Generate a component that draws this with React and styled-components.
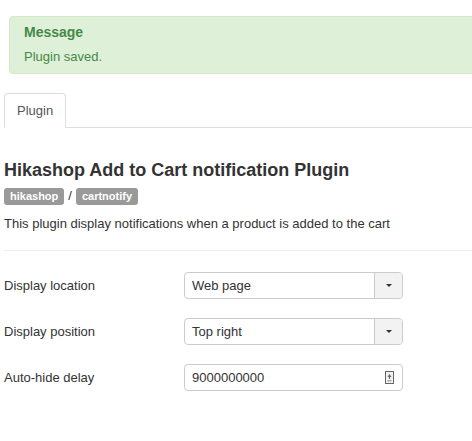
import styled, { createGlobalStyle } from 'styled-components';

const GlobalStyle = createGlobalStyle`
  body {
    margin: 0;
    background: #fff;
    font-family: "Liberation Sans", Arial, sans-serif;
    font-size: 13px;
    line-height: 18px;
    color: #333;
  }
`;

const Page = styled.div`
  padding: 16px 4px 0 4px;
  overflow: hidden;
`;

const Alert = styled.div`
  margin: 0 -30px 0 5px;
  padding: 6px 14px 7px;
  background: #dff0d8;
  border: 1px solid #d6e9c6;
  border-radius: 4px;
  color: #468847;
`;

const AlertHeading = styled.h4`
  margin: 0 0 7px;
  font-size: 14px;
  line-height: 18px;
  font-weight: bold;
`;

const AlertText = styled.p`
  margin: 0;
`;

const Tabs = styled.ul`
  display: flex;
  list-style: none;
  margin: 19px -4px 0 0;
  padding: 0;
  border-bottom: 1px solid #ddd;
`;

const Tab = styled.li`
  padding: 8px 12px 7px;
  margin-bottom: -1px;
  border: 1px solid #ddd;
  border-bottom-color: #fff;
  border-radius: 4px 4px 0 0;
  background: #fff;
  color: #555;
`;

const Title = styled.h3`
  margin: 32px 0 0;
  font-size: 18px;
  line-height: 20px;
  font-weight: bold;
  color: #333;
`;

const Crumbs = styled.div`
  display: flex;
  align-items: center;
  gap: 4px;
  margin-top: 7px;
`;

const Badge = styled.span`
  padding: 1px 6px;
  font-size: 11px;
  font-weight: bold;
  line-height: 15px;
  color: #fff;
  background: #999;
  border-radius: 3px;
`;

const Desc = styled.p`
  margin: 10px 0 0;
`;

const Rule = styled.hr`
  margin: 17px -4px 0 0;
  border: 0;
  border-top: 1px solid #eee;
`;

const Form = styled.div`
  display: flex;
  flex-direction: column;
  gap: 19px;
  margin-top: 21px;
`;

const Row = styled.div`
  display: grid;
  grid-template-columns: 180px 219px;
  align-items: center;
`;

const Label = styled.label`
  color: #333;
`;

const Field = styled.div`
  display: flex;
  align-items: center;
  height: 25px;
  border: 1px solid #ccc;
  border-radius: 4px;
  background: #fff;
  color: #333;
  overflow: hidden;
`;

const Value = styled.span`
  flex: 1;
  padding-left: 7px;
`;

const Caret = styled.span`
  display: flex;
  align-items: center;
  justify-content: center;
  width: 27px;
  height: 100%;
  border-left: 1px solid #ccc;
  background: #f2f2f2;

  &::after {
    content: '';
    border-left: 3px solid transparent;
    border-right: 3px solid transparent;
    border-top: 3px solid #333;
  }
`;

const SpinIcon = styled.svg`
  margin-right: 8px;
`;

const Select = ({ value }) => (
  <Field>
    <Value>{value}</Value>
    <Caret />
  </Field>
);

export default function App() {
  return (
    <Page>
      <GlobalStyle />
      <Alert>
        <AlertHeading>Message</AlertHeading>
        <AlertText>Plugin saved.</AlertText>
      </Alert>

      <Tabs>
        <Tab>Plugin</Tab>
      </Tabs>

      <Title>Hikashop Add to Cart notification Plugin</Title>
      <Crumbs>
        <Badge>hikashop</Badge>
        <span>/</span>
        <Badge>cartnotify</Badge>
      </Crumbs>
      <Desc>This plugin display notifications when a product is added to the cart</Desc>
      <Rule />

      <Form>
        <Row>
          <Label>Display location</Label>
          <Select value="Web page" />
        </Row>
        <Row>
          <Label>Display position</Label>
          <Select value="Top right" />
        </Row>
        <Row>
          <Label>Auto-hide delay</Label>
          <Field>
            <Value>9000000000</Value>
            <SpinIcon width="9" height="13" viewBox="0 0 9 13">
              <rect x="0.5" y="0.5" width="8" height="12" fill="#f0f0f0" stroke="#666" />
              <path d="M2.5 6 L4.5 3 L6.5 6 Z" fill="#666" />
              <rect x="4" y="6" width="1" height="2" fill="#666" />
              <rect x="2.5" y="9" width="4" height="1.5" fill="#aaa" />
            </SpinIcon>
          </Field>
        </Row>
      </Form>
    </Page>
  );
}
